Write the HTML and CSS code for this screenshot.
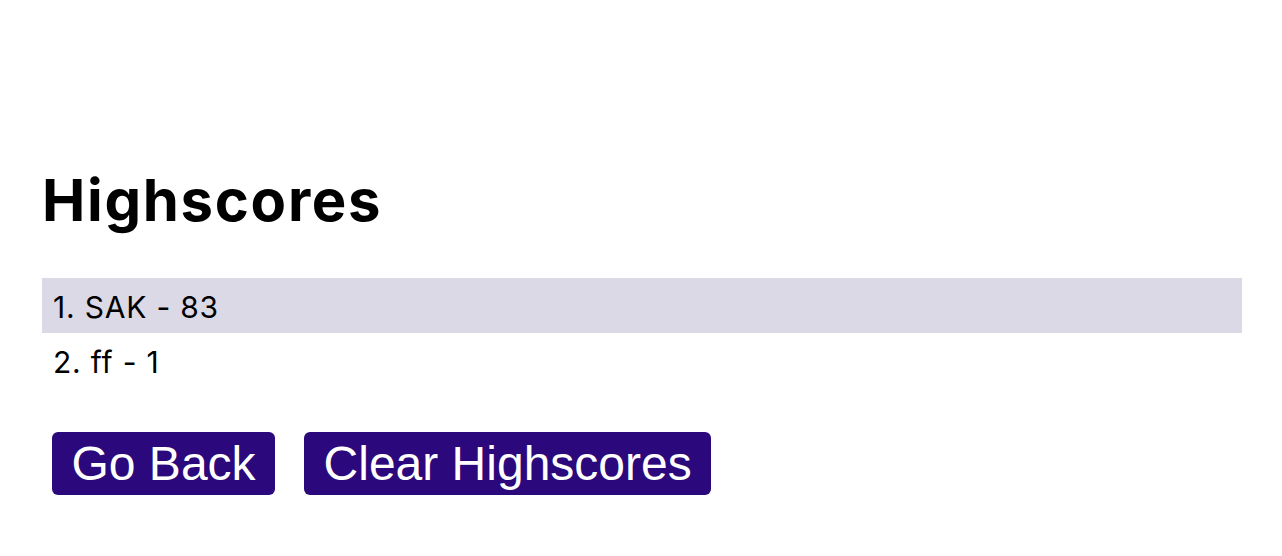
FILE: index.html
```html
<!DOCTYPE html>
<html>
<head>
<meta charset="utf-8">
<link rel="stylesheet" href="styles.css">
</head>
<body>
<main class="page">
  <h1 class="title">Highscores</h1>
  <ol class="scores">
    <li class="score">1. SAK - 83</li>
    <li class="score">2. ff - 1</li>
  </ol>
  <div class="actions">
    <button class="btn">Go Back</button>
    <button class="btn">Clear Highscores</button>
  </div>
</main>
</body>
</html>
```
FILE: styles.css
```css
html, body {
  margin: 0;
  padding: 0;
  background: #ffffff;
}
.page {
  padding: 160px 40px 0 42px;
  font-family: Inter, "Noto Sans", sans-serif;
  color: #000;
}
.title {
  margin: 0;
  font-size: 58px;
  font-weight: 700;
  line-height: 80px;
  letter-spacing: 1.7px;
}
.scores {
  list-style: none;
  margin: 38px 0 0 0;
  padding: 0;
}
.score {
  height: 55px;
  display: flex;
  align-items: center;
  padding: 2px 0 0 11px;
  box-sizing: border-box;
  font-size: 30px;
  letter-spacing: 0.8px;
}
.score:nth-child(odd) {
  background: #dcd9e6;
}
.actions {
  display: flex;
  gap: 29px;
  margin: 44px 0 0 10px;
}
.btn {
  font-family: "Liberation Sans", Arial, sans-serif;
  font-size: 48px;
  color: #fff;
  background: #2b087b;
  border: none;
  border-radius: 6px;
  padding: 4px 19.5px;
  height: 63px;
  line-height: 55px;
}
```
